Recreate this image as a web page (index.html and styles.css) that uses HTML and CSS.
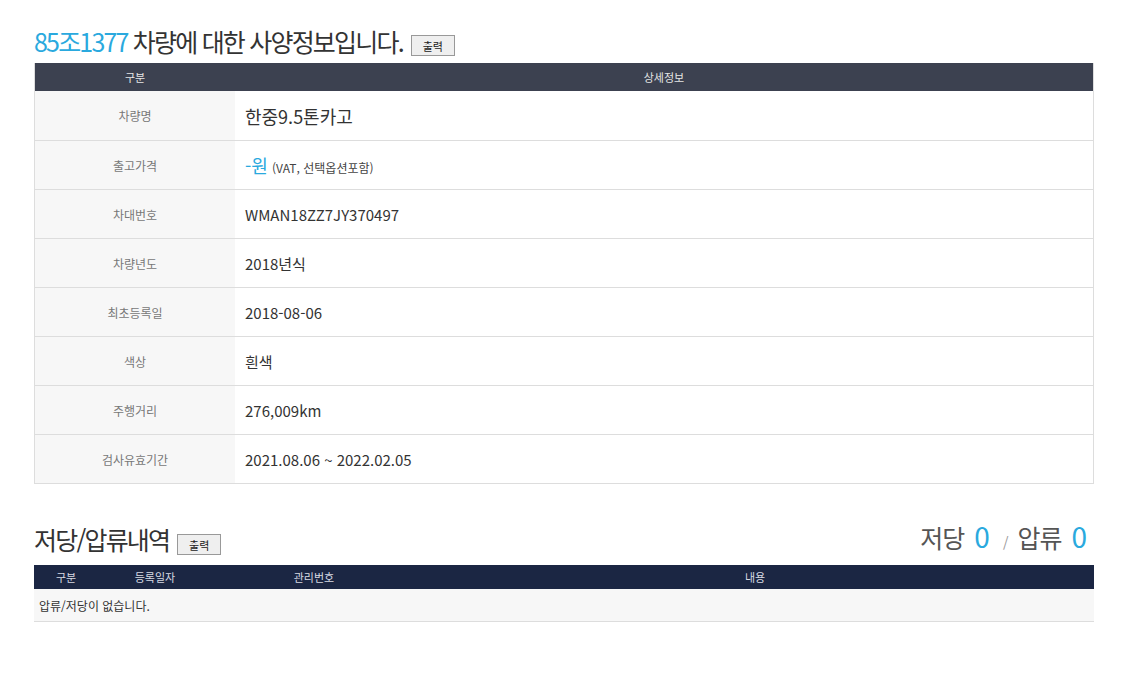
FILE: index.html
```html
<!DOCTYPE html>
<html lang="ko">
  <head>
    <meta charset="UTF-8" />
    <title>차량 사양정보</title>
    <link rel="stylesheet" href="styles.css">
  </head>
  <body>
    <div class="wrap">
      <div class="title-row">
        <h2 class="title"><span class="blue">85조1377</span> 차량에 대한 사양정보입니다.</h2>
        <button type="button" class="print-btn">출력</button>
      </div>

      <table class="spec">
        <thead>
          <tr>
            <th class="col-label">구분</th>
            <th>상세정보</th>
          </tr>
        </thead>
        <tbody>
          <tr><td class="label">차량명</td><td class="value big">한중9.5톤카고</td></tr>
          <tr><td class="label">출고가격</td><td class="value"><span class="price">-원</span> <span class="note">(VAT, 선택옵션포함)</span></td></tr>
          <tr><td class="label">차대번호</td><td class="value">WMAN18ZZ7JY370497</td></tr>
          <tr><td class="label">차량년도</td><td class="value">2018년식</td></tr>
          <tr><td class="label">최초등록일</td><td class="value">2018-08-06</td></tr>
          <tr><td class="label">색상</td><td class="value">흰색</td></tr>
          <tr><td class="label">주행거리</td><td class="value">276,009km</td></tr>
          <tr><td class="label">검사유효기간</td><td class="value">2021.08.06 ~ 2022.02.05</td></tr>
        </tbody>
      </table>

      <div class="title-row lien-head">
        <h2 class="title">저당/압류내역</h2>
        <button type="button" class="print-btn">출력</button>
        <div class="counts">저당 <span class="blue num">0</span> <span class="slash">/</span> 압류 <span class="blue num">0</span></div>
      </div>

      <table class="lien">
        <thead>
          <tr>
            <th class="c1">구분</th>
            <th class="c2">등록일자</th>
            <th class="c3">관리번호</th>
            <th>내용</th>
          </tr>
        </thead>
        <tbody>
          <tr><td colspan="4" class="empty">압류/저당이 없습니다.</td></tr>
        </tbody>
      </table>
    </div>
  </body>
</html>
```

FILE: styles.css
```css
body {
  margin: 0;
  background: #fff;
  font-family: "Noto Sans CJK KR", "Noto Sans", sans-serif;
  color: #333;
}
.wrap {
  width: 1060px;
  padding: 20px 0 0 34px;
}
.title-row {
  display: flex;
  align-items: flex-end;
  height: 43px;
}
.title {
  margin: 0 0 5px;
  font-size: 25px;
  font-weight: 400;
  letter-spacing: -1.8px;
  line-height: 34px;
  color: #333;
}
.blue {
  color: #2aa9de;
}
.print-btn {
  margin: 0 0 7px 8px;
  width: 44px;
  height: 21px;
  padding: 0;
  font-family: inherit;
  font-size: 11px;
  color: #222;
  background: #efefef;
  border: 1px solid #999;
  border-radius: 0;
}
table {
  width: 100%;
  border-collapse: collapse;
  table-layout: fixed;
}
.spec {
  border-left: 1px solid #ddd;
  border-right: 1px solid #ddd;
}
.spec th {
  height: 28px;
  padding: 0;
  background: #3c4150;
  color: #e6e6e6;
  font-size: 11px;
  font-weight: 400;
}
.spec .col-label {
  width: 200px;
}
.spec td {
  height: 48px;
  border-bottom: 1px solid #ddd;
  padding: 0;
}
.spec tbody tr:first-child td {
  height: 49px;
}
.spec .label {
  background: #f7f7f7;
  color: #777;
  font-size: 12px;
  text-align: center;
}
.spec .value {
  padding-left: 10px;
  font-size: 15px;
  color: #333;
  background: #fff;
}
.spec .big {
  font-size: 18px;
}
.price {
  color: #2aa9de;
  font-size: 18px;
}
.note {
  font-size: 12px;
  color: #444;
}
.lien-head {
  margin-top: 32px;
  height: 49px;
}
.lien-head .title {
  margin-bottom: 9px;
}
.lien-head .print-btn {
  margin-bottom: 10px;
}
.counts {
  margin-left: auto;
  margin-right: 4px;
  margin-bottom: 6px;
  font-size: 25px;
  letter-spacing: -1px;
  line-height: 34px;
  color: #555;
}
.counts .num {
  font-size: 28px;
  margin: 0 4px;
}
.counts .slash {
  font-size: 14px;
  color: #999;
  margin: 0 4px;
}
.lien th {
  height: 24px;
  padding: 0;
  background: #1b2643;
  color: #d8dbe3;
  font-size: 11px;
  font-weight: 400;
}
.lien .c1 { width: 64px; }
.lien .c2 { width: 114px; }
.lien .c3 { width: 204px; }
.lien td {
  height: 32px;
  padding: 0 0 0 5px;
  background: #f7f7f7;
  border-bottom: 1px solid #ddd;
  font-size: 12px;
  color: #333;
}
```
